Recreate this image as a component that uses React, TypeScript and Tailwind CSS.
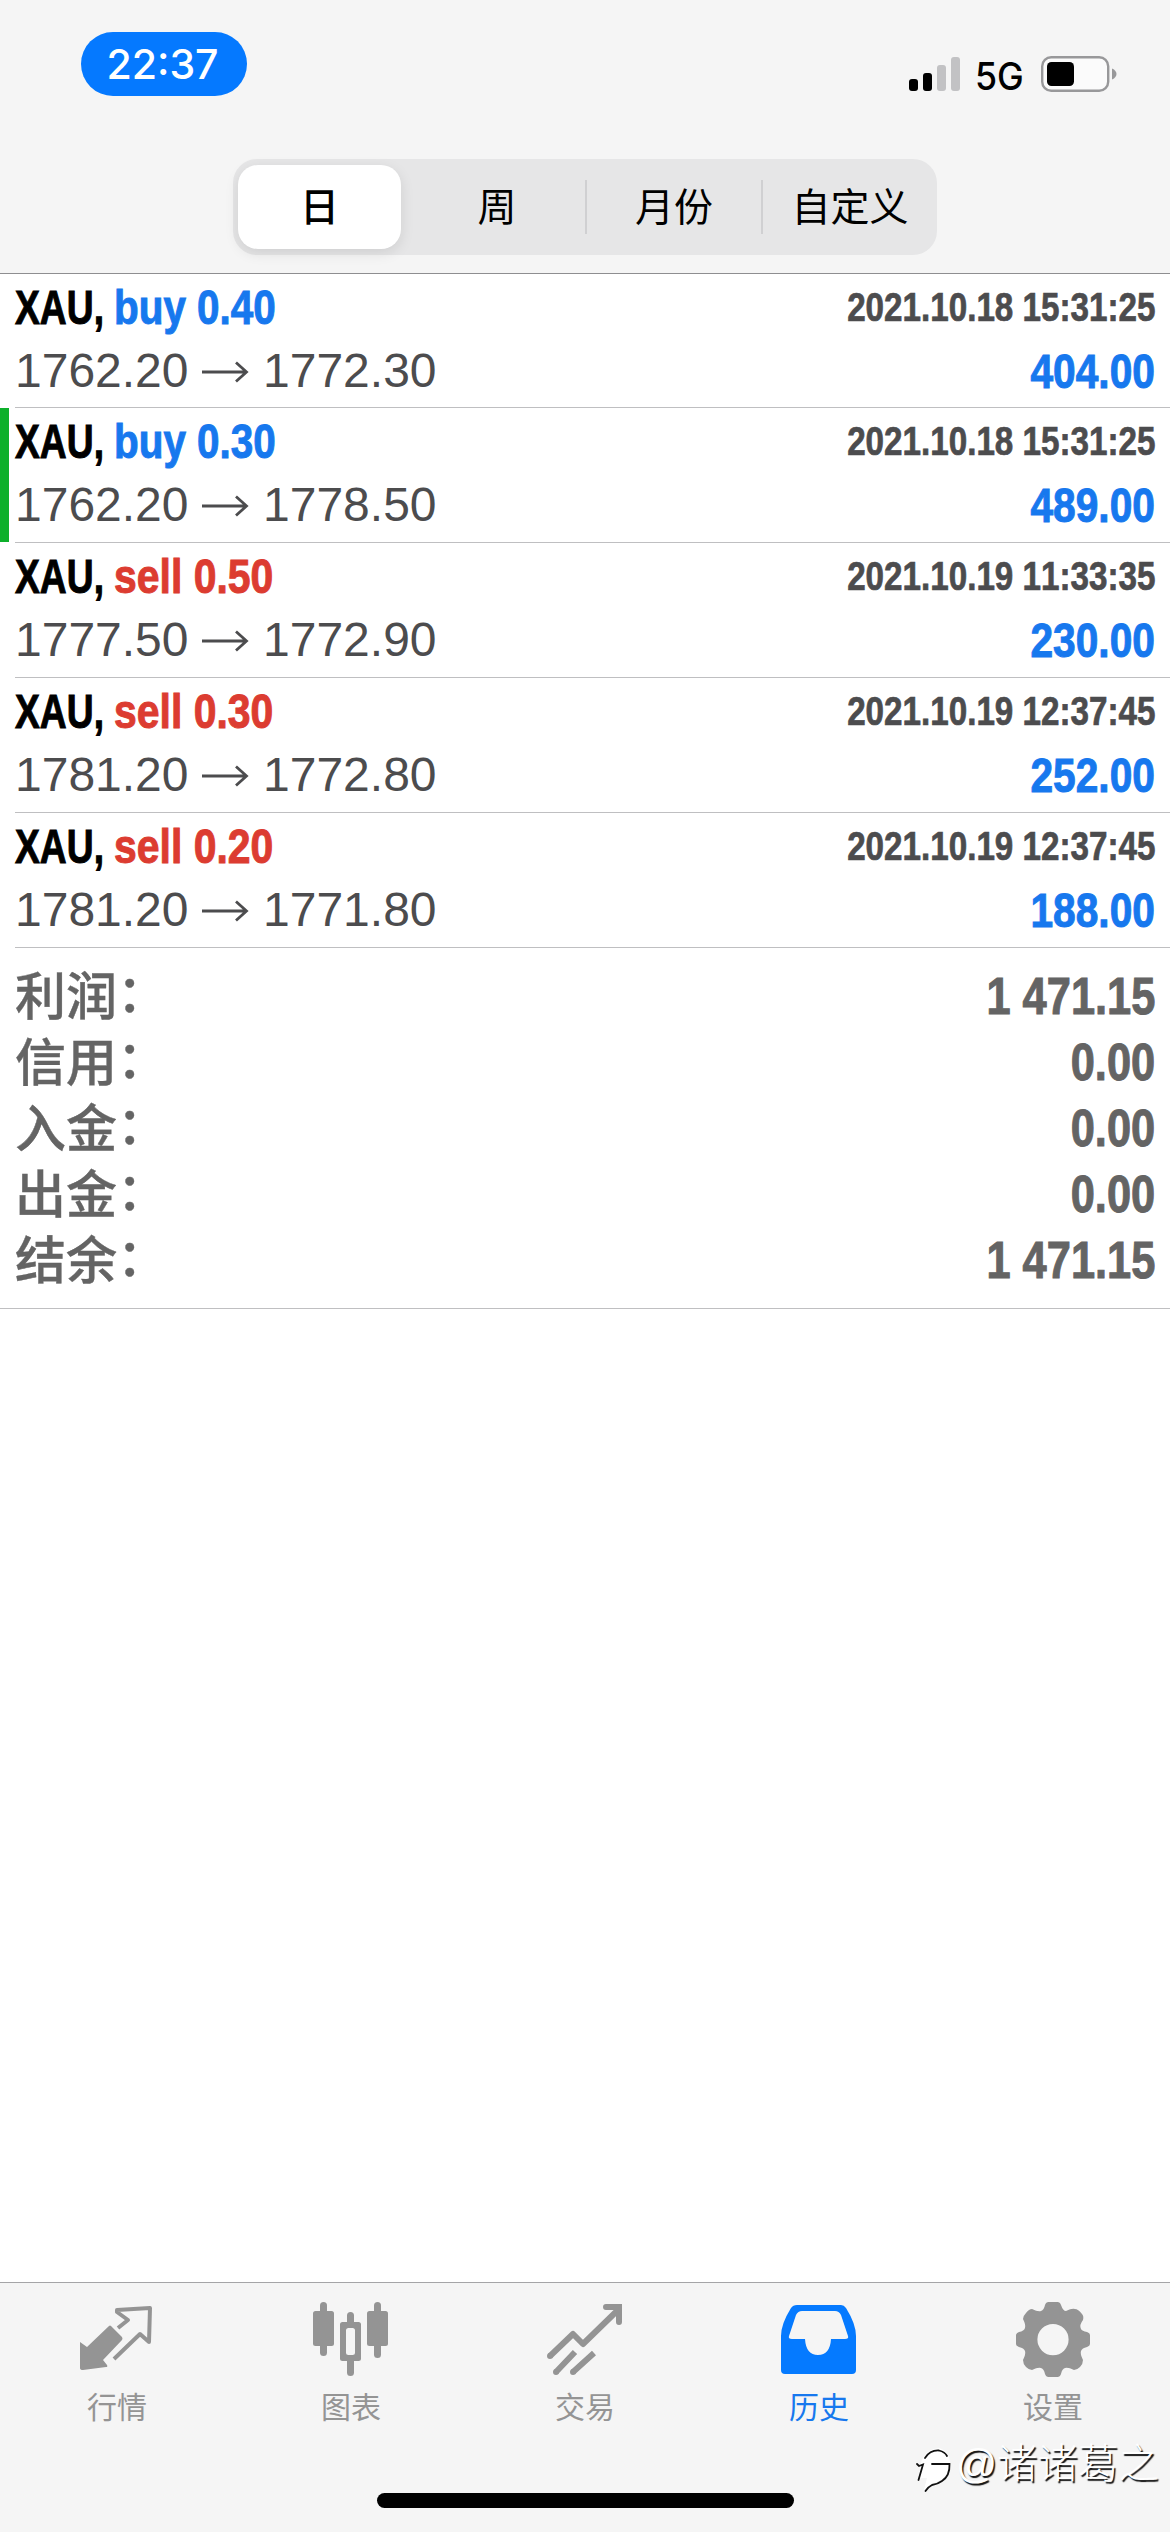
import type { ReactNode } from "react";

type Deal = { side: "buy" | "sell"; volume: string; open: string; close: string; time: string; profit: string; marked?: boolean };

const deals: Deal[] = [
  { side: "buy", volume: "0.40", open: "1762.20", close: "1772.30", time: "2021.10.18 15:31:25", profit: "404.00" },
  { side: "buy", volume: "0.30", open: "1762.20", close: "1778.50", time: "2021.10.18 15:31:25", profit: "489.00", marked: true },
  { side: "sell", volume: "0.50", open: "1777.50", close: "1772.90", time: "2021.10.19 11:33:35", profit: "230.00" },
  { side: "sell", volume: "0.30", open: "1781.20", close: "1772.80", time: "2021.10.19 12:37:45", profit: "252.00" },
  { side: "sell", volume: "0.20", open: "1781.20", close: "1771.80", time: "2021.10.19 12:37:45", profit: "188.00" },
];

const totals = [
  ["利润", "1 471.15"],
  ["信用", "0.00"],
  ["入金", "0.00"],
  ["出金", "0.00"],
  ["结余", "1 471.15"],
];

function StatusBar() {
  return (
    <div className="flex h-[159px] items-start justify-between pl-[81px] pr-[52px]">
      <div className="mt-8 flex h-16 w-[166px] items-center justify-center rounded-full bg-[#0579ff] pr-[3px] font-['Inter'] text-[41px] font-medium text-white">
        <span className="mt-0.5">22:37</span>
      </div>
      <div className="mt-[56px] flex h-9 items-center">
        <svg width="52" height="36" viewBox="0 0 52 36">
          <rect x="0" y="23" width="9" height="12" rx="3" fill="#000" />
          <rect x="14" y="17" width="9" height="18" rx="3" fill="#000" />
          <rect x="28" y="9" width="9" height="26" rx="3" fill="#c2c2c4" />
          <rect x="42" y="1" width="9" height="34" rx="3" fill="#c2c2c4" />
        </svg>
        <span className="ml-[14px] mt-[3px] w-[59px] origin-left scale-x-[0.94] font-['Inter'] text-[38px] leading-9 font-medium">5G</span>
        <svg className="ml-[7px]" width="77" height="36" viewBox="0 0 77 36">
          <rect x="1.2" y="1.2" width="66" height="33.6" rx="9" fill="#fbfbfb" stroke="#98989a" strokeWidth="2.4" />
          <rect x="6" y="6" width="27" height="24" rx="4.5" fill="#000" />
          <path d="M71 12.500c6 2.500 6 8.500 0 11z" fill="#98989a" />
        </svg>
      </div>
    </div>
  );
}

function Segments() {
  return (
    <div className="mx-auto grid h-24 w-[704px] grid-cols-4 items-center rounded-[24px] bg-[#e6e6e7] text-center text-[39px]">
      <div className="ml-[5px] flex h-[84px] w-[163px] items-center justify-center rounded-[20px] bg-white pt-0.5 font-medium shadow-[0_4px_14px_rgba(0,0,0,0.1)]">日</div>
      <div className="pt-0.5 leading-[52px]">周</div>
      <div className="border-l-2 border-[#d0d0d2] pt-0.5 leading-[52px]">月份</div>
      <div className="border-l-2 border-[#d0d0d2] pt-0.5 leading-[52px]">自定义</div>
    </div>
  );
}

function Arrow() {
  return (
    <svg className="mr-[14px] ml-[13.500px] mt-px" width="47" height="22" viewBox="0 0 47 22" fill="none" stroke="#4c4c4e" strokeWidth="2.800">
      <path d="M0 11H44M34 1.500L44.500 11L34 20.500" />
    </svg>
  );
}

function DealRow({ deal }: { deal: Deal }) {
  return (
    <div className="relative ml-[15px] flex h-[135px] flex-col border-b border-[#bfbfc1] pr-[15px] first:h-[134px]">
      {deal.marked && <div className="absolute top-0 -left-[15px] h-[134px] w-[9px] bg-[#0db02b]" />}
      <div className="flex h-[66px] items-center justify-between font-bold whitespace-nowrap">
        <div className="flex text-[49px] leading-[66px] [-webkit-text-stroke:1px_currentColor]">
          <span className="w-[99px] origin-left scale-x-[0.76]">XAU,</span>
          <span className={deal.side === "buy" ? "origin-left scale-x-[0.825] text-[#1778ee]" : "origin-left scale-x-[0.835] text-[#dc3c31]"}>
            {deal.side} {deal.volume}
          </span>
        </div>
        <span className="origin-right scale-x-[0.83] text-[40px] text-[#4c4c4e] [-webkit-text-stroke:0.7px_currentColor] [font-kerning:none]">{deal.time}</span>
      </div>
      <div className="flex h-[62px] items-center justify-between">
        <div className="flex items-center text-[48px] leading-[62px] text-[#4c4c4e]">
          <span>{deal.open}</span>
          <Arrow />
          <span>{deal.close}</span>
        </div>
        <span className="origin-right scale-x-[0.83] text-[49px] leading-[62px] font-bold text-[#1778ee] [-webkit-text-stroke:1px_currentColor]">{deal.profit}</span>
      </div>
    </div>
  );
}

function Tab({ label, active, children }: { label: string; active?: boolean; children: ReactNode }) {
  return (
    <div className={active ? "flex flex-col items-center text-[#1778ee]" : "flex flex-col items-center text-[#949494]"}>
      <svg className="mt-[17px]" width="80" height="80" viewBox="0 0 80 80" fill="currentColor">
        {children}
      </svg>
      <span className="mt-2 text-[30px] leading-10">{label}</span>
    </div>
  );
}

function TabBar() {
  return (
    <nav className="grid h-[150px] grid-cols-5">
      <Tab label="行情">
        <path d="M3 42L10 47L32 26Q33 25 34 26L45 37Q46 39 45 40L26 60L30 65Q31 67 29 67L6 70Q3 70 3 68Z" />
        <path d="M41 28L51 20L40 12V10L73 8L72 42L63 34L37 59" fill="none" stroke="currentColor" strokeWidth="4" strokeLinejoin="round" />
      </Tab>
      <Tab label="图表">
        <rect x="9" y="2" width="7" height="54" rx="3.500" />
        <rect x="2" y="11" width="21" height="35" rx="2.500" />
        <rect x="63" y="2" width="7" height="56" rx="3.500" />
        <rect x="56" y="11" width="21" height="35" rx="2.500" />
        <path d="M36 22V15.500a3.500 3.500 0 0 1 7 0V22H47.500A2.500 2.500 0 0 1 50 24.500V58.500A2.500 2.500 0 0 1 47.500 61H43V72.500a3.500 3.500 0 0 1-7 0V61H31.500A2.500 2.500 0 0 1 29 58.500V24.500A2.500 2.500 0 0 1 31.500 22ZM37.500 28A2.500 2.500 0 0 0 35 30.500V52.500A2.500 2.500 0 0 0 37.500 55H41.500A2.500 2.500 0 0 0 44 52.500V30.500A2.500 2.500 0 0 0 41.500 28Z" fillRule="evenodd" />
      </Tab>
      <Tab label="交易">
        <g fill="none" stroke="currentColor" strokeWidth="6">
          <path d="M5 56L28 34L38 44L75 8M11 72L30 52M28 72L49 53" strokeLinejoin="round" />
          <path d="M61 7H74V22" strokeLinecap="round" />
          <path d="M5 56h.01M11 72h.01M28 72h.01" strokeLinecap="round" />
        </g>
      </Tab>
      <Tab label="历史" active>
        <path
          fill="#057aff"
          fillRule="evenodd"
          d="M18 5H62Q65 5 67 8Q77 24 77 36V70Q77 74 73 74H6Q2 74 2 70V36Q2 24 12 8Q14 5 18 5ZM23 11Q19 11 17 15L10 36Q9 39 13 39H26Q27 55 39 55Q51 55 52 39H66Q70 39 69 36L62 15Q60 11 56 11Z"
        />
      </Tab>
      <Tab label="设置">
        <path
          fillRule="evenodd"
          d="M35.500 2H44.500Q47 2 48 5Q50 11 53 11Q59 8 62 9Q65 9 69 14Q71 16 70 20Q66 25 68 29Q69 31 74 32Q77 33 77 35V44Q77 46 74 47Q69 48 68 51Q67 54 70 60Q70 64 67 67Q64 70 61 70Q55 67 52 68Q49 69 48 74Q47 77 44.500 77H35.500Q33 77 32 74Q31 69 28 68Q25 67 19 70Q16 70 13 67Q10 64 10 60Q13 54 12 51Q11 48 6 47Q3 46 3 44V35Q3 33 6 32Q11 31 12 28Q13 25 10 19Q10 16 13 13Q16 9 19 9Q25 12 28 11Q31 10 32 5Q33 2 35.500 2ZM40 24A15.600 15.600 0 1 0 40 55.200A15.600 15.600 0 1 0 40 24Z"
        />
      </Tab>
    </nav>
  );
}

function Watermark() {
  return (
    <div className="absolute top-[2434px] left-[912px] flex items-center whitespace-nowrap text-white">
      <svg width="44" height="60" viewBox="0 0 44 60" fill="none" strokeLinecap="round">
        <path d="M9 28Q14 15 27 14Q38 17 38 30Q36 45 22 49L12 56L15 44L7 44Z" fill="#fff" />
        <g stroke="#111" strokeWidth="1.800">
          <path d="M13 24Q18 16 27 16.500Q33 18 35 22M20 30H37.500Q38 42 30 47Q26 50 20 51Q16 53 13.500 57M5 30L7 32L11 30.500L6.500 46" />
        </g>
      </svg>
      <span className="text-[40.500px] leading-[58px] font-light [text-shadow:1.500px_1.500px_1px_#111]">@诸诸葛之</span>
    </div>
  );
}

export default function App() {
  return (
    <div className="relative flex h-[2532px] w-[1170px] flex-col overflow-hidden bg-white font-['Liberation_Sans','Noto_Sans_CJK_SC',sans-serif] text-black">
      <header className="h-[274px] border-b border-[#8e8e90] bg-[#f5f5f5]">
        <StatusBar />
        <Segments />
      </header>
      <main className="flex-1">
        <section>
          {deals.map((deal, i) => (
            <DealRow key={i} deal={deal} />
          ))}
        </section>
        <section className="h-[361px] border-b border-[#bfbfc1] pt-[15px] pr-[15px] pl-[15px] text-[#646464]">
          {totals.map(([label, value]) => (
            <div key={label} className="flex h-[66px] items-center justify-between">
              <span className="mt-1 flex text-[51px] leading-[66px] font-medium [-webkit-text-stroke:0.4px_currentColor]">
                {label}
                <span className="relative -top-[3px]">：</span>
              </span>
              <span className="origin-right scale-x-[0.835] text-[52px] leading-[66px] font-bold [-webkit-text-stroke:1px_currentColor]">{value}</span>
            </div>
          ))}
        </section>
      </main>
      <footer className="h-[250px] border-t border-[#a5a5a7] bg-[#f5f5f5]">
        <TabBar />
        <div className="mx-auto mt-[60px] h-[15px] w-[417px] rounded-full bg-black" />
      </footer>
      <Watermark />
    </div>
  );
}
